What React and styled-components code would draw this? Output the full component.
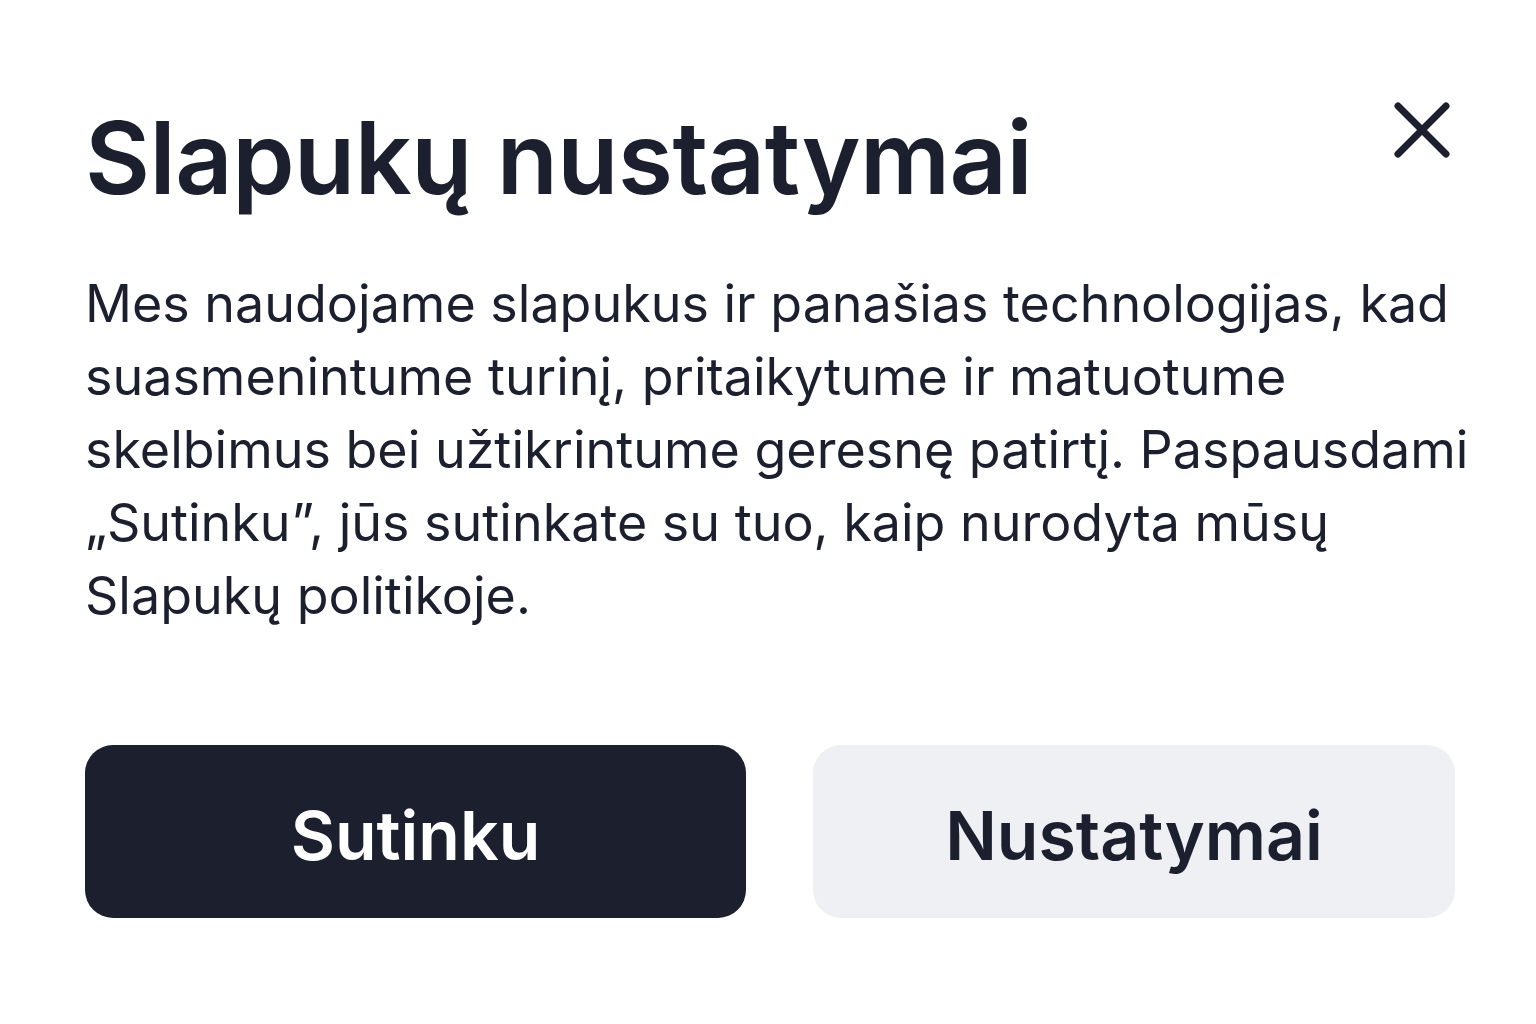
import React from 'react'
import styled, { createGlobalStyle } from 'styled-components'

const GlobalStyle = createGlobalStyle`
    html, body {
        margin: 0;
        padding: 0;
        background: #ffffff;
    }
    body {
        font-family: Inter, "Noto Sans", "Liberation Sans", sans-serif;
        color: #1b1f2e;
    }
`;

const Dialog = styled.div`
    width: 1536px;
    height: 1024px;
    box-sizing: border-box;
    padding: 96px 81px 0 85px;
    display: flex;
    flex-direction: column;
`;

const Header = styled.div`
    display: flex;
    flex-direction: row;
    justify-content: space-between;
    align-items: flex-start;
`;

const Title = styled.h1`
    margin: 0;
    font-size: 100px;
    font-weight: 600;
    line-height: 124px;
    letter-spacing: -0.5px;
    color: #1b1f2e;
`;

const CloseButton = styled.button`
    width: 70px;
    height: 70px;
    margin: -2px -1px 0 0;
    padding: 0;
    border: none;
    background: transparent;
    display: flex;
    align-items: center;
    justify-content: center;
    cursor: pointer;
    color: #1b1f2e;
`;

const Text = styled.p`
    margin: 47px -60px 0 0;
    font-size: 52px;
    font-weight: 400;
    line-height: 73px;
    white-space: nowrap;
    color: #1b1f2e;
`;

const Actions = styled.div`
    display: grid;
    grid-template-columns: 662fr 643fr;
    gap: 67px;
    margin-top: 113px;
`;

const Button = styled.button`
    height: 173px;
    padding: 6px 0 0;
    border: none;
    border-radius: 28px;
    font-family: Inter, "Noto Sans", "Liberation Sans", sans-serif;
    font-size: 68px;
    font-weight: 600;
    cursor: pointer;
    background: ${p => (p.$primary ? '#1b1f2e' : '#eff0f3')};
    color: ${p => (p.$primary ? '#ffffff' : '#1b1f2e')};
`;

const App = () => {
    return (
        <>
            <GlobalStyle />
            <Dialog>
                <Header>
                    <Title>Slapukų nustatymai</Title>
                    <CloseButton aria-label="Uždaryti">
                        <svg width="70" height="70" viewBox="0 0 70 70" fill="none">
                            <path d="M12 12 L60 60 M60 12 L12 60" stroke="currentColor" strokeWidth="7" strokeLinecap="round" />
                        </svg>
                    </CloseButton>
                </Header>
                <Text>
                    Mes naudojame slapukus ir panašias technologijas, kad<br />
                    suasmenintume turinį, pritaikytume ir matuotume<br />
                    skelbimus bei užtikrintume geresnę patirtį. Paspausdami<br />
                    „Sutinku”, jūs sutinkate su tuo, kaip nurodyta mūsų<br />
                    Slapukų politikoje.
                </Text>
                <Actions>
                    <Button $primary>Sutinku</Button>
                    <Button>Nustatymai</Button>
                </Actions>
            </Dialog>
        </>
    )
}

export default App
